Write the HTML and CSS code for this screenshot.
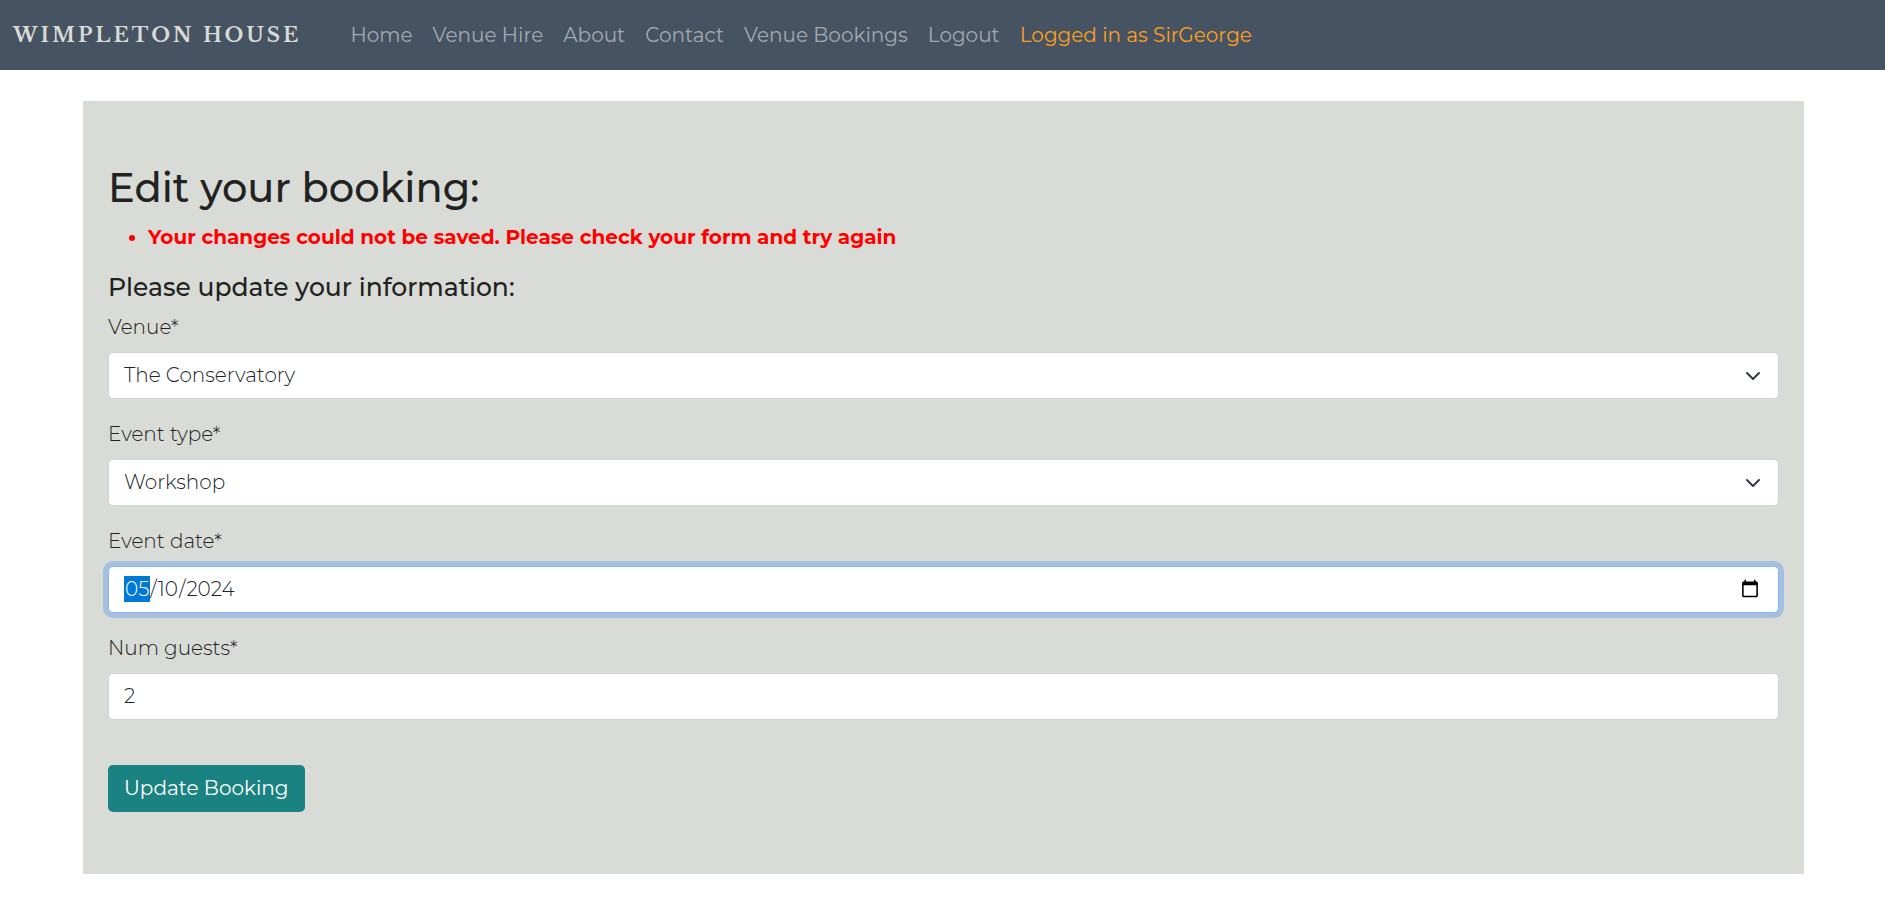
FILE: index.html
```html
<!DOCTYPE html>
<html lang="en-US">
<head>
<meta charset="utf-8">
<meta name="viewport" content="width=device-width, initial-scale=1">
<title>Wimpleton House - Edit booking</title>
<link rel="stylesheet" href="styles.css">
</head>
<body>
<header class="navbar">
  <a class="brand" href="#">WIMPLETON HOUSE</a>
  <nav class="nav-links" aria-label="Main">
    <a href="#">Home</a>
    <a href="#">Venue Hire</a>
    <a href="#">About</a>
    <a href="#">Contact</a>
    <a href="#">Venue Bookings</a>
    <a href="#">Logout</a>
    <span class="user">Logged in as SirGeorge</span>
  </nav>
</header>
<main class="panel">
  <h1>Edit your booking:</h1>
  <ul class="messages">
    <li>Your changes could not be saved. Please check your form and try again</li>
  </ul>
  <h2>Please update your information:</h2>
  <form>
    <div class="field">
      <label for="venue">Venue*</label>
      <div class="select-wrap">
        <select class="control" id="venue"><option>The Conservatory</option></select>
        <svg class="chevron" viewBox="0 0 16 16" aria-hidden="true"><path d="m2 5 6 6 6-6"/></svg>
      </div>
    </div>
    <div class="field">
      <label for="event-type">Event type*</label>
      <div class="select-wrap">
        <select class="control" id="event-type"><option>Workshop</option></select>
        <svg class="chevron" viewBox="0 0 16 16" aria-hidden="true"><path d="m2 5 6 6 6-6"/></svg>
      </div>
    </div>
    <div class="field">
      <label for="event-date">Event date*</label>
      <input class="control active" id="event-date" type="date" value="2024-05-10">
    </div>
    <div class="field">
      <label for="guests">Num guests*</label>
      <input class="control" id="guests" type="number" value="2">
    </div>
    <button class="submit" type="button">Update Booking</button>
  </form>
</main>
</body>
</html>
```
FILE: styles.css
```css
* {
  box-sizing: border-box;
}

body {
  margin: 0;
  background: #fff;
  color: #222;
  font-family: Montserrat, Inter, "Open Sans", sans-serif;
  font-size: 20px;
  font-weight: 300;
  line-height: 30px;
}

.navbar {
  display: flex;
  align-items: center;
  gap: 49px;
  min-height: 70px;
  padding: 0 13px;
  background: #465362;
}

.brand {
  color: #d9dbd6;
  font-family: "Libre Baskerville", "Liberation Serif", serif;
  font-size: 20px;
  font-weight: 700;
  letter-spacing: 3px;
  text-decoration: none;
  white-space: nowrap;
}

.nav-links {
  display: flex;
  flex-wrap: wrap;
  gap: 20px;
  font-weight: 400;
}

.nav-links a {
  color: #a3a9b1;
  text-decoration: none;
}

.user {
  color: #ff9f1c;
}

.panel {
  margin: 31px 81px 29px 83px;
  padding: 63px 25px 62px;
  background: #d9dbd6;
}

h1,
h2 {
  margin: 0 0 10px;
  font-weight: 500;
}

h1 {
  font-size: 40px;
  line-height: 48px;
}

h2 {
  font-size: 25px;
  line-height: 30px;
}

.messages {
  margin: 0 0 20px;
  padding-left: 40px;
  color: #f00;
  font-weight: 700;
}

.field {
  margin-bottom: 20px;
}

.field label {
  display: block;
  margin-bottom: 10px;
  line-height: 30px;
}

.control {
  display: block;
  width: 100%;
  height: 47px;
  margin: 0;
  padding: 0 16px 2px 15px;
  border: 1px solid #ced4da;
  border-radius: 5px;
  background: #fff;
  color: #212529;
  font: inherit;
  appearance: none;
}

.control.active {
  border-color: #86b7fe;
  box-shadow: 0 0 0 5px rgba(13, 110, 253, 0.25);
  outline: none;
}

.control::-webkit-datetime-edit-month-field {
  background: #0078d7;
  color: #fff;
}

.control::-webkit-inner-spin-button {
  display: none;
}

.select-wrap {
  display: grid;
  align-items: center;
}

.select-wrap > * {
  grid-area: 1 / 1;
}

.chevron {
  justify-self: end;
  width: 16px;
  height: 16px;
  margin-right: 18px;
  fill: none;
  stroke: #343a40;
  stroke-width: 2;
  stroke-linecap: round;
  stroke-linejoin: round;
  pointer-events: none;
}

.submit {
  height: 47px;
  margin-top: 25px;
  padding: 0 16px 2px;
  border: 0;
  border-radius: 5px;
  background: #1a8281;
  color: #fff;
  font: inherit;
  font-weight: 400;
}
```
